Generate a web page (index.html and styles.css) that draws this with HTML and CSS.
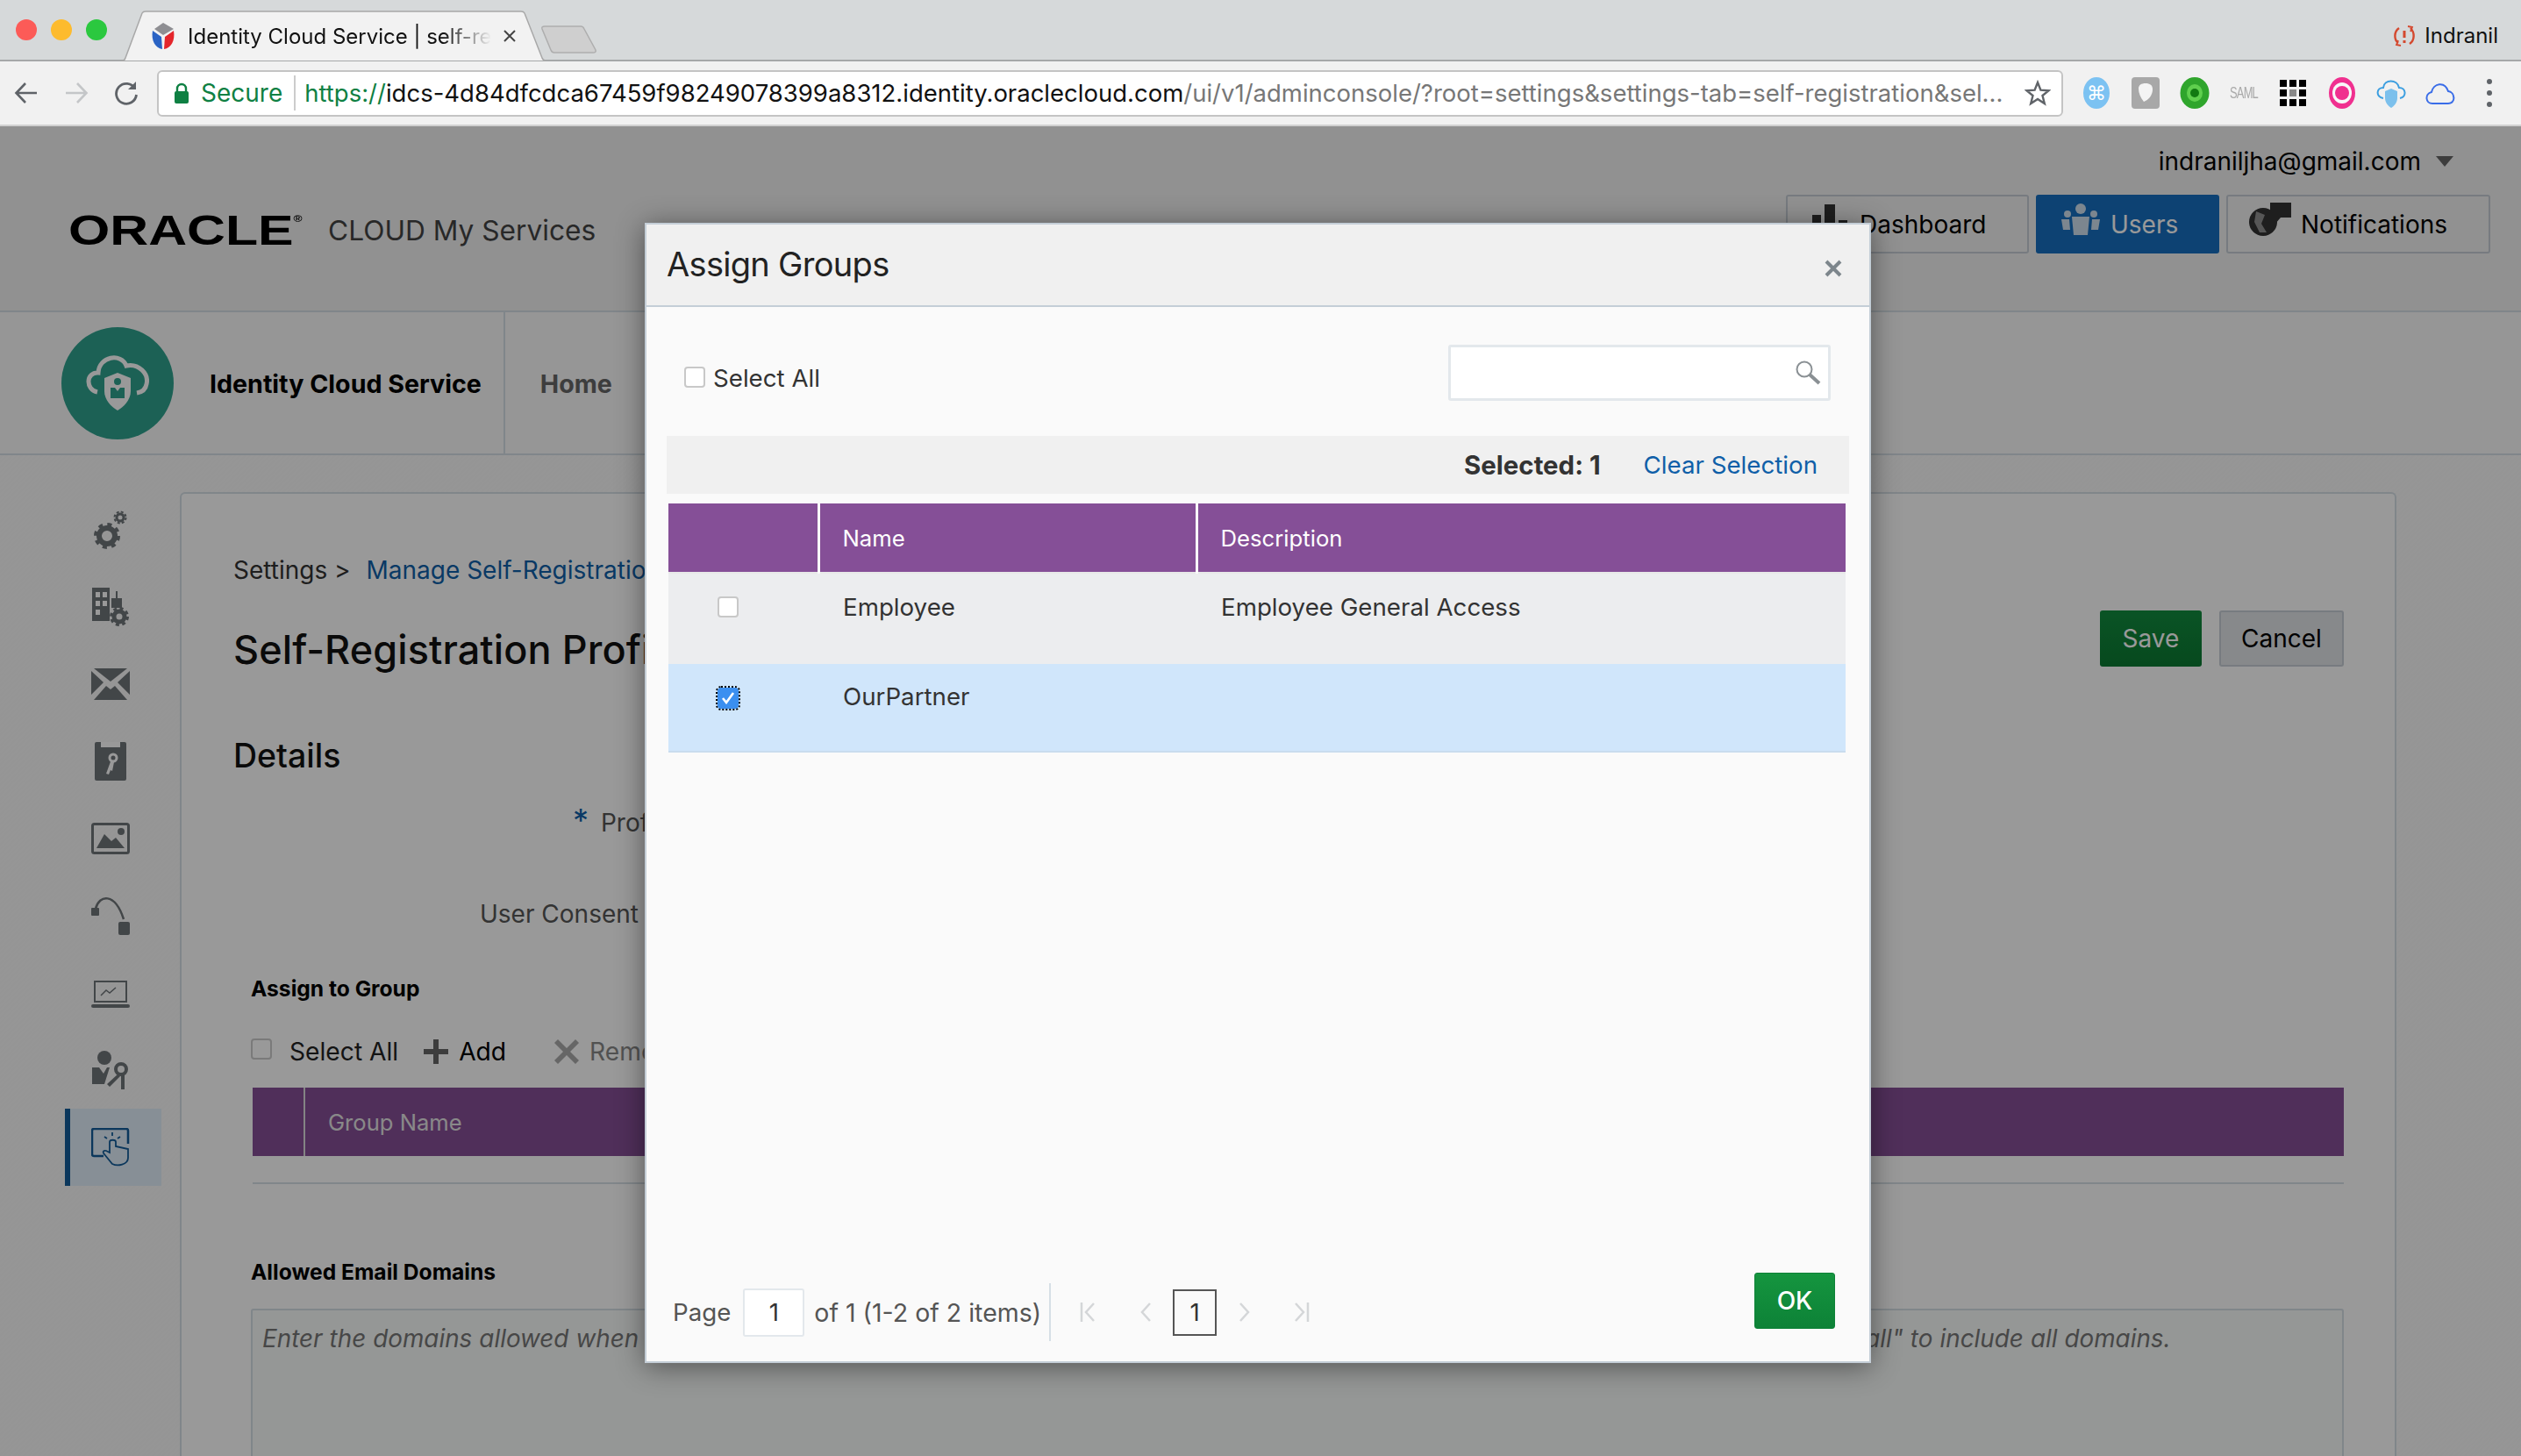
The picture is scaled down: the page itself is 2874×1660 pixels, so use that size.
FILE: index.html
```html
<!DOCTYPE html>
<html>
<head>
  <meta charset="utf-8">
  <title>Identity Cloud Service | self-registration</title>
  <meta name="viewport" content="width=device-width, initial-scale=1.0">
  <link rel="stylesheet" href="styles.css">
</head>
<body>
  <!-- browser chrome -->
  <div class="tabstrip">
    <div class="traffic">
      <span class="light light-red"></span>
      <span class="light light-yellow"></span>
      <span class="light light-green"></span>
    </div>
    <div class="tab">
      <svg class="tab-shape" width="484" height="58" viewBox="0 0 484 58"><path d="M0 57 H2 Q4 57 5 54 L24 3 Q25 1 28 1 H456 Q459 1 460 3 L480 54 Q481 57 484 57" fill="#f2f2f2" stroke="#a8a8a8" stroke-width="1.5"/></svg>
      <svg class="favicon" width="32" height="32" viewBox="0 0 32 32">
        <path d="M16 1 L28 8 L16 15 L6 8 Z" fill="#8e8e92"/>
        <path d="M4 10 L14 17 L15 31 C7 30 2 21 4 10 Z" fill="#2a63c4"/>
        <path d="M28 10 L18 17 L17 31 C25 30 30 21 28 10 Z" fill="#e4252b"/>
      </svg>
      <span class="tab-title">Identity Cloud Service | self-re</span>
      <svg class="tab-close" width="14" height="14" viewBox="0 0 14 14"><path d="M1 1L13 13M13 1L1 13" stroke="#444" stroke-width="2"/></svg>
    </div>
    <svg class="newtab" width="66" height="34" viewBox="0 0 66 34"><path d="M5 2 H46 Q49 2 50 5 L63 29 Q64 32 60 32 H16 Q13 32 12 29 L2 5 Q1 2 5 2 Z" fill="#cfcfcf" stroke="#aeaeae" stroke-width="1.5"/></svg>
    <div class="profile">
      <svg width="26" height="24" viewBox="0 0 26 24" fill="none" stroke="#d4492f" stroke-width="2.4"><path d="M7 3 C1 7 1 16 6 20 M19 21 C25 17 25 8 20 3"/><path d="M13 6 V14 M13 17 V20" stroke-width="3"/><path d="M17 1 L22 2 L20 7 M9 23 L4 22 L6 17" stroke-width="1.8"/></svg>
      <span>Indranil</span>
    </div>
  </div>

  <div class="toolbar">
    <svg class="nav-icon" width="28" height="30" viewBox="0 0 28 30" fill="none" stroke="#5f6368" stroke-width="2.6"><path d="M26 15 H3 M13 4 L2.5 15 L13 26"/></svg>
    <svg class="nav-icon" width="28" height="30" viewBox="0 0 28 30" fill="none" stroke="#c4c6c8" stroke-width="2.6"><path d="M2 15 H25 M15 4 L25.5 15 L15 26"/></svg>
    <svg class="nav-icon" width="28" height="30" viewBox="0 0 28 30" fill="none" stroke="#5f6368" stroke-width="2.8"><path d="M24 10 A11.5 11.5 0 1 0 25.5 17"/><path d="M25 2 V11 H16" fill="#5f6368" stroke="none"/></svg>
    <div class="omnibox">
      <svg class="lock" width="18" height="24" viewBox="0 0 18 24"><path d="M4 11 V7 A5 5 0 0 1 14 7 V11" fill="none" stroke="#0f8043" stroke-width="2.4"/><rect x="1" y="10" width="16" height="14" rx="2" fill="#0f8043"/></svg>
      <span class="secure">Secure</span>
      <span class="omni-sep"></span>
      <span class="url"><span class="url-scheme">https://</span><span class="url-host">idcs-4d84dfcdca67459f98249078399a8312.identity.oraclecloud.com</span>/ui/v1/adminconsole/?root=settings&amp;settings-tab=self-registration&amp;sel...</span>
      <svg class="star" width="30" height="30" viewBox="0 0 30 30"><path d="M15 3 L18.4 11.6 L27.6 12.2 L20.5 18 L22.8 27 L15 22 L7.2 27 L9.5 18 L2.4 12.2 L11.6 11.6 Z" fill="none" stroke="#5f6368" stroke-width="2.4"/></svg>
    </div>
    <div class="extensions">
      <span class="ext ext-cmd">⌘</span>
      <span class="ext ext-shield"><svg width="32" height="36" viewBox="0 0 32 36"><rect width="32" height="36" rx="4" fill="#a8a8a8"/><path d="M16 7 C21 7 24 9 24 14 C24 21 19 26 14 28 C10 23 8 18 8 13 C8 9 11 7 16 7 Z" fill="#f4f4f4"/></svg></span>
      <span class="ext"><svg width="34" height="36" viewBox="0 0 34 36"><ellipse cx="17" cy="18" rx="16.500" ry="18" fill="#2fa52c"/><ellipse cx="17" cy="18" rx="9" ry="10" fill="#5fcf4e"/><circle cx="17" cy="18" r="5" fill="#127a12"/></svg></span>
      <span class="ext ext-saml">SAML</span>
      <span class="ext"><svg width="30" height="30" viewBox="0 0 30 30"><path d="M0 0H8V8H0ZM11 0H19V8H11ZM22 0H30V8H22ZM0 11H8V19H0ZM22 11H30V19H22ZM0 22H8V30H0ZM11 22H19V30H11ZM22 22H30V30H22Z"/><path d="M11 11H19V19H11Z" fill="#888"/></svg></span>
      <span class="ext"><svg width="32" height="36" viewBox="0 0 32 36"><ellipse cx="16" cy="18" rx="15" ry="18" fill="#f0308f"/><ellipse cx="16" cy="18" rx="11" ry="12" fill="#f8f8f8"/><circle cx="16" cy="18" r="8" fill="#f0308f"/></svg></span>
      <span class="ext"><svg width="34" height="36" viewBox="0 0 34 36" fill="none" stroke="#3d9fe0" stroke-width="2"><path d="M8 24 C-1 22 0 12 8 12 C9 2 24 2 26 12 C34 12 35 22 27 24"/><path d="M10 16 L17 13 L24 16 V24 C24 29 20 33 17 35 C14 33 10 29 10 24 Z" fill="#7cc0ec" stroke="none"/></svg></span>
      <span class="ext"><svg width="34" height="26" viewBox="0 0 34 26" fill="none" stroke="#3a6de8" stroke-width="2"><path d="M8 25 C0 25 -1 14 7 12 C9 2 22 -1 26 11 C34 12 35 25 26 25 Z"/></svg></span>
      <span class="ext ext-kebab"><i></i><i></i><i></i></span>
    </div>
  </div>

  <!-- console page, dimmed by the overlay -->
  <div class="page">
    <header class="top-header">
      <div class="brand">
        <span class="oracle-logo">ORACLE<sup>®</sup></span>
        <span class="brand-text">CLOUD My Services</span>
      </div>
      <div class="user-area">
        <div class="user-line">indraniljha@gmail.com <span class="caret"></span></div>
        <div class="top-tabs">
          <a class="top-tab tab-dashboard">
            <svg class="tab-icon" width="40" height="34" viewBox="0 0 40 34"><path d="M0 12H10V34H0ZM14 0H26V34H14ZM30 18H40V34H30Z" fill="#333"/></svg>
            Dashboard
          </a>
          <a class="top-tab tab-users">
            <svg class="tab-icon" width="46" height="36" viewBox="0 0 46 36" fill="#cfe0ee"><circle cx="23" cy="6" r="6"/><circle cx="8" cy="12" r="4"/><circle cx="38" cy="12" r="4"/><path d="M13 15 H33 L31 36 H15 Z"/><path d="M1 18 H10 L11 30 H3 Z M36 18 H45 L43 30 H35 Z"/></svg>
            Users
          </a>
          <a class="top-tab tab-notifications">
            <svg class="tab-icon" width="48" height="38" viewBox="0 0 48 38"><circle cx="16" cy="22" r="16" fill="#333"/><path d="M8 10 L18 14 L14 24 L20 34 L12 34 L6 22 Z" fill="#8f8f8f"/><path d="M24 0 H48 V17 H36 L30 24 V17 H24 Z" fill="#333"/></svg>
            Notifications
          </a>
        </div>
      </div>
    </header>

    <nav class="service-bar">
      <span class="service-logo">
        <svg width="72" height="66" viewBox="0 0 72 66" fill="none" stroke="#fff" stroke-width="5"><path d="M13 43 C-1 40 0 20 14 21 C15 2 40 -2 46 13 C60 10 72 22 69 34 C68 40 64 43 58 44"/><path d="M21 27 L36 21 L51 27 V42 C51 52 43 60 36 64 C29 60 21 52 21 42 Z" fill="#fff" stroke="none"/><circle cx="36" cy="31" r="4" fill="#30a28e" stroke="none"/><path d="M28 38 L33 38 L36 42 L39 38 L44 38 V50 H28 Z" fill="#30a28e" stroke="none"/></svg>
      </span>
      <span class="service-name">Identity Cloud Service</span>
      <a class="service-home">Home</a>
    </nav>

    <div class="content">
      <aside class="sidebar">
        <div class="side-item">
          <svg width="38" height="44" viewBox="0 0 38 44" fill="none" stroke="#6f7579"><circle cx="15" cy="29" r="9" stroke-width="6"/><circle cx="15" cy="29" r="13" stroke-width="4" stroke-dasharray="5 5.200"/><circle cx="30" cy="8" r="4" stroke-width="3"/><circle cx="30" cy="8" r="6.500" stroke-width="2" stroke-dasharray="3 2.100"/></svg>
        </div>
        <div class="side-item">
          <svg width="42" height="44" viewBox="0 0 42 44" fill="#6f7579"><path d="M0 0H20V38H0Z"/><path d="M4 5H9V11H4ZM12 5H17V11H12ZM4 15H9V21H4ZM12 15H17V21H12ZM4 25H9V31H4Z" fill="#fff"/><path d="M22 12H27V4H29V12H34V23H22Z"/><circle cx="31" cy="33" r="6" fill="none" stroke="#6f7579" stroke-width="5"/><circle cx="31" cy="33" r="9.500" fill="none" stroke="#6f7579" stroke-width="3" stroke-dasharray="4 3.500"/></svg>
        </div>
        <div class="side-item">
          <svg width="44" height="36" viewBox="0 0 44 36" fill="#6f7579"><path d="M3 0H41L22 15Z"/><path d="M0 3L14 16L0 30ZM44 3L30 16L44 30Z"/><path d="M3 36L17 20L22 24L27 20L41 36Z"/></svg>
        </div>
        <div class="side-item">
          <svg width="36" height="44" viewBox="0 0 36 44" fill="#6f7579"><path d="M2 0H34Q36 0 36 2V42Q36 44 34 44H2Q0 44 0 42V2Q0 0 2 0Z"/><path d="M7 0H29V6H7Z" fill="#fff"/><circle cx="21" cy="18" r="4" fill="none" stroke="#fff" stroke-width="3"/><path d="M18.500 21L13 36L16 37L18 32L20 33L22 23Z" fill="#fff"/></svg>
        </div>
        <div class="side-item">
          <svg width="44" height="36" viewBox="0 0 44 36" fill="none"><rect x="1.500" y="1.500" width="41" height="33" rx="2" stroke="#6f7579" stroke-width="3"/><path d="M6 29L15 13L23 21L28 17L38 29Z" fill="#6f7579"/><circle cx="34" cy="10" r="4" fill="#6f7579"/></svg>
        </div>
        <div class="side-item">
          <svg width="44" height="44" viewBox="0 0 44 44" fill="none"><path d="M5 14C9 -2 27 -5 37 26" stroke="#6f7579" stroke-width="2.500"/><rect y="13" width="9" height="9" rx="1" fill="#6f7579"/><rect x="31" y="29" width="13" height="15" rx="2" fill="#6f7579"/></svg>
        </div>
        <div class="side-item side-laptop">
          <svg width="44" height="31" viewBox="0 0 44 31" fill="none" stroke="#6f7579" stroke-width="2"><rect x="4" y="1" width="36" height="23"/><path d="M11 17L17 11L21 14L28 8" stroke-width="1.500"/><rect y="27" width="44" height="4" rx="2" fill="#6f7579" stroke="none"/></svg>
        </div>
        <div class="side-item">
          <svg width="42" height="44" viewBox="0 0 42 44" fill="#6f7579"><circle cx="14" cy="8" r="8"/><path d="M0 19H8L13 26L17 19H20L14 38H0Z"/><circle cx="33" cy="21" r="6" fill="none" stroke="#6f7579" stroke-width="4"/><path d="M30 26L17 38L20 41L32 29ZM33 27H37V44H33Z"/></svg>
        </div>
        <div class="side-item side-active">
          <svg width="44" height="44" viewBox="0 0 44 44" fill="none" stroke="#135d9a" stroke-width="2.500"><path d="M14 32H3Q1 32 1 30V3Q1 1 3 1H40Q42 1 42 3V18"/><path d="M21 16V28L17 26C13 25 13 28 15 30L24 41C30 44 42 42 42 34V24L28 21V16C28 13 21 13 21 16Z" stroke-width="1.800"/><path d="M24 5V9M15 10L18 12M33 10L30 12" stroke-width="1.800"/></svg>
        </div>
      </aside>

      <main class="card">
        <div class="breadcrumb">Settings &gt; <a>Manage Self-Registration Profiles</a></div>
        <div class="title-row">
          <h1>Self-Registration Profiles</h1>
          <div class="title-actions">
            <button class="btn btn-save">Save</button>
            <button class="btn btn-cancel">Cancel</button>
          </div>
        </div>
        <h2>Details</h2>
        <div class="field field-profile"><span class="req">*</span> Profile Name</div>
        <div class="field field-consent">User Consent</div>

        <div class="indent">
          <div class="sub-title sub-assign">Assign to Group</div>
          <div class="list-tools">
            <span class="page-check"></span>
            <span class="tool-select">Select All</span>
            <svg class="tool-add" width="28" height="28" viewBox="0 0 28 28"><path d="M11 0H17V11H28V17H17V28H11V17H0V11H11Z" fill="#666"/></svg>
            <span class="tool-add-label">Add</span>
            <svg class="tool-remove" width="28" height="28" viewBox="0 0 28 28"><path d="M4 0L14 10L24 0L28 4L18 14L28 24L24 28L14 18L4 28L0 24L10 14L0 4Z" fill="#aaa"/></svg>
            <span class="tool-remove-label">Remove</span>
          </div>
          <div class="group-head"><span class="group-check"></span><span class="group-name">Group Name</span></div>
          <div class="group-line"></div>
          <div class="sub-title sub-domains">Allowed Email Domains</div>
          <div class="domains">
            Enter the domains allowed when users register with this self-registration profile. Separate multiple email domains with a comma, or enter "all" to include all domains.
            <svg class="grip" width="18" height="18" viewBox="0 0 18 18" fill="none" stroke="#333" stroke-width="1.500"><path d="M1 17L17 1M10 17L17 10"/></svg>
          </div>
        </div>
      </main>
    </div>

    <div class="overlay"></div>

    <!-- Assign Groups dialog -->
    <div class="dialog">
      <div class="dialog-head">
        <span class="dialog-title">Assign Groups</span>
        <svg class="dialog-close" width="20" height="20" viewBox="0 0 20 20"><path d="M2 2L18 18M18 2L2 18" stroke="#7d868c" stroke-width="4"/></svg>
      </div>
      <div class="dialog-tools">
        <label class="select-all"><span class="check"></span>Select All</label>
        <div class="search">
          <svg width="30" height="30" viewBox="0 0 30 30" fill="none" stroke="#8a9094"><circle cx="11" cy="11" r="8.500" stroke-width="2"/><path d="M17 17L28 27" stroke-width="4"/></svg>
        </div>
      </div>
      <div class="selected-bar">
        <b>Selected: 1</b>
        <a>Clear Selection</a>
      </div>
      <table class="groups">
        <thead>
          <tr><th class="col-check"></th><th class="col-name">Name</th><th>Description</th></tr>
        </thead>
        <tbody>
          <tr class="row-plain">
            <td class="cell-check"><span class="check"></span></td>
            <td>Employee</td>
            <td>Employee General Access</td>
          </tr>
          <tr class="row-selected">
            <td class="cell-check">
              <span class="check check-on">
                <svg width="16" height="14" viewBox="0 0 16 14" fill="none" stroke="#fff" stroke-width="2.600"><path d="M2 7L6 12L14 1"/></svg>
              </span>
            </td>
            <td>OurPartner</td>
            <td></td>
          </tr>
        </tbody>
      </table>
      <div class="dialog-foot">
        <div class="pager">
          <span>Page</span>
          <span class="page-input">1</span>
          <span class="page-count">of 1 (1-2 of 2 items)</span>
          <span class="pager-sep"></span>
          <svg class="pager-first" width="18" height="22" viewBox="0 0 18 22" fill="none" stroke="#d4d6d8" stroke-width="2.500"><path d="M2 0V22M16 1L7 11L16 21"/></svg>
          <svg class="pager-prev" width="14" height="22" viewBox="0 0 14 22" fill="none" stroke="#d4d6d8" stroke-width="2.500"><path d="M12 1L3 11L12 21"/></svg>
          <span class="page-current">1</span>
          <svg class="pager-next" width="14" height="22" viewBox="0 0 14 22" fill="none" stroke="#d4d6d8" stroke-width="2.500"><path d="M2 1L11 11L2 21"/></svg>
          <svg class="pager-last" width="18" height="22" viewBox="0 0 18 22" fill="none" stroke="#d4d6d8" stroke-width="2.500"><path d="M16 0V22M2 1L11 11L2 21"/></svg>
        </div>
        <button class="btn btn-ok">OK</button>
      </div>
    </div>
  </div>
</body>
</html>
```

FILE: styles.css
```css
* {
  margin: 0;
  padding: 0;
  box-sizing: border-box;
}

body {
  font-family: Inter, "Liberation Sans", sans-serif;
  width: 2874px;
  height: 1660px;
  overflow: hidden;
  color: #333;
  font-size: 27.7px;
}

/* browser chrome */
.tabstrip {
  display: flex;
  align-items: flex-start;
  height: 70px;
  background: #d6d9da;
  border-bottom: 2px solid #a6a8a9;
}

.traffic {
  display: flex;
  gap: 16px;
  padding: 22px 0 0 18px;
  width: 138px;
}

.light {
  width: 24px;
  height: 24px;
  border-radius: 50%;
}

.light-red { background: #fc5b57; }
.light-yellow { background: #fdbb2e; }
.light-green { background: #2bc83f; }

.tab {
  position: relative;
  display: flex;
  align-items: center;
  width: 484px;
  height: 58px;
  padding: 0 32px;
  margin-top: 12px;
}

.tab-shape {
  position: absolute;
  left: 0;
  top: 0;
}

.favicon {
  position: relative;
  flex: none;
}

.tab-title {
  position: relative;
  flex: none;
  width: 346px;
  margin-left: 12px;
  overflow: hidden;
  white-space: nowrap;
  color: #111;
  font-size: 24px;
  -webkit-mask-image: linear-gradient(90deg, #000 84%, transparent 100%);
  mask-image: linear-gradient(90deg, #000 84%, transparent 100%);
}

.tab-close {
  position: relative;
  flex: none;
  margin-left: 14px;
}

.newtab {
  margin: 28px 0 0 -6px;
}

.profile {
  display: flex;
  align-items: center;
  gap: 10px;
  margin-left: auto;
  padding: 26px 26px 0 0;
  color: #111;
  font-size: 24px;
}

.toolbar {
  display: flex;
  align-items: center;
  height: 74px;
  padding-left: 16px;
  background: #f1f1f1;
  border-bottom: 2px solid #d0d0d0;
}

.nav-icon {
  flex: none;
  margin-right: 29px;
}

.nav-icon:nth-child(3) {
  margin-right: 21px;
}

.omnibox {
  display: flex;
  align-items: center;
  flex: none;
  width: 2173px;
  height: 53px;
  padding: 0 12px 0 17px;
  background: #fff;
  border: 2px solid #c4c4c4;
  border-radius: 6px;
  font-size: 27.5px;
  white-space: nowrap;
}

.secure {
  margin-left: 13px;
  color: #0f8043;
  font-size: 28px;
}

.omni-sep {
  width: 2px;
  height: 40px;
  margin: 0 10px 0 13px;
  background: #ccc;
}

.url {
  flex: 1;
  color: #777;
}

.url-scheme { color: #0f8043; }
.url-host { color: #111; }

.extensions {
  display: flex;
  align-items: center;
  flex: 1;
  padding-left: 10px;
}

.ext {
  display: flex;
  align-items: center;
  justify-content: center;
  flex: none;
  width: 56px;
  height: 40px;
}

.ext-cmd {
  width: 30px;
  height: 36px;
  margin: 0 13px;
  background: #7cc2f2;
  border-radius: 50%;
  color: #fff;
  font: 22px "DejaVu Sans", sans-serif;
}

.ext-saml {
  color: #a9a9a9;
  font: 19px "Liberation Sans", sans-serif;
  letter-spacing: -1.2px;
  transform: scaleX(0.68);
}

.ext-kebab {
  flex-direction: column;
  gap: 7px;
}

.ext-kebab i {
  width: 6px;
  height: 6px;
  background: #5f6368;
  border-radius: 50%;
}

/* console page */
.page {
  position: relative;
  height: 1516px;
  overflow: hidden;
  background: repeating-linear-gradient(135deg, #fbfbfb 0 2px, #f8f8f8 2px 4px);
}

.top-header {
  display: flex;
  justify-content: space-between;
  height: 212px;
  padding: 0 35px 0 78px;
  background: #f2f2f2;
  border-bottom: 2px solid #d6dfe6;
}

.brand {
  display: flex;
  align-items: center;
  padding-top: 26px;
}

.oracle-logo {
  flex: none;
  width: 296px;
  color: #000;
  font: bold 49px "Liberation Sans", sans-serif;
  transform: scaleX(1.24);
  transform-origin: left center;
}

.oracle-logo sup {
  font-size: 11px;
  vertical-align: 26px;
}

.brand-text {
  color: #444;
  font-size: 31.7px;
}

.user-area {
  display: flex;
  flex-direction: column;
  align-items: flex-end;
}

.user-line {
  display: flex;
  align-items: center;
  gap: 17px;
  height: 40px;
  margin-top: 20px;
  padding-right: 42px;
  color: #000;
  font-size: 28px;
}

.caret {
  width: 0;
  height: 0;
  border-left: 10px solid transparent;
  border-right: 10px solid transparent;
  border-top: 12px solid #666;
}

.top-tabs {
  display: flex;
  gap: 8px;
  margin-top: 18px;
}

.top-tab {
  display: flex;
  align-items: center;
  gap: 11px;
  height: 67px;
  padding: 0 26px;
  background: #f2f2f2;
  border: 2px solid #c6ced5;
  border-radius: 3px;
  color: #000;
  font-size: 28px;
}

.tab-icon {
  margin-top: -12px;
}

.tab-dashboard {
  width: 277px;
  gap: 14px;
  padding-left: 28px;
}

.tab-users {
  width: 209px;
  background: #176fc0;
  border-color: #176fc0;
  color: #fff;
}

.tab-notifications {
  width: 301px;
  padding-left: 24px;
}

.service-bar {
  display: flex;
  align-items: center;
  height: 163px;
  padding-left: 70px;
  background: #fbfbfb;
  border-bottom: 2px solid #d6dfe6;
}

.service-logo {
  display: flex;
  align-items: center;
  justify-content: center;
  width: 128px;
  height: 128px;
  background: #30a28e;
  border-radius: 50%;
}

.service-name {
  display: flex;
  align-items: center;
  height: 161px;
  margin-left: 41px;
  padding: 2px 25px 0 0;
  border-right: 2px solid #d6dfe6;
  color: #000;
  font-weight: 700;
  font-size: 28.6px;
}

.service-home {
  margin: 2px 0 0 40px;
  color: #666;
  font-weight: 700;
  font-size: 28.6px;
}

.content {
  display: flex;
  align-items: flex-start;
}

.sidebar {
  flex: none;
  width: 110px;
  margin-left: 74px;
  padding-top: 41px;
}

.side-item {
  display: flex;
  align-items: center;
  justify-content: center;
  height: 88px;
  padding-right: 6px;
}

.side-laptop {
  padding-top: 3px;
}

.side-active {
  border-left: 6px solid #135d9a;
  background: #e1eefa;
  padding-right: 12px;
}

.card {
  flex: none;
  width: 2527px;
  min-height: 1200px;
  margin: 42px 0 0 21px;
  padding: 0 58px 0 59px;
  background: #fff;
  border: 2px solid #d6dfe6;
  border-bottom: 0;
  border-radius: 6px 6px 0 0;
}

.breadcrumb {
  margin-top: 67px;
  line-height: 40px;
  color: #333;
  font-size: 28px;
}

.breadcrumb a {
  margin-left: 10px;
  color: #0f5fa8;
}

.title-row {
  display: flex;
  justify-content: space-between;
  height: 75px;
  margin-top: 26px;
}

.title-row h1 {
  padding-top: 15px;
  line-height: 60px;
  color: #111;
  font-weight: 500;
  font-size: 45px;
  letter-spacing: 0.1px;
}

.title-actions {
  display: flex;
  gap: 20px;
}

.btn {
  height: 64px;
  border-radius: 3px;
  font: 28px Inter, "Liberation Sans", sans-serif;
}

.btn-save {
  width: 116px;
  background: linear-gradient(#128c3f, #0b7a32);
  border: 0;
  color: #fff;
}

.btn-cancel {
  width: 142px;
  background: #e2e5e8;
  border: 2px solid #c6ced5;
  color: #000;
}

.card h2 {
  margin-top: 66px;
  line-height: 50px;
  color: #111;
  font-weight: 500;
  font-size: 37.5px;
}

.field {
  line-height: 36px;
  color: #555;
  font-size: 28px;
  white-space: nowrap;
}

.req {
  color: #0f5fa8;
  font-size: 36px;
  line-height: 20px;
  margin-right: 6px;
}

.field-profile {
  margin-top: 33px;
  padding-left: 387px;
}

.field-consent {
  margin-top: 68px;
  padding-left: 281px;
}

.indent {
  margin-left: 20px;
}

.sub-title {
  line-height: 30px;
  color: #000;
  font-weight: 700;
  font-size: 24.6px;
}

.sub-assign { margin-top: 52px; }

.list-tools {
  display: flex;
  align-items: center;
  height: 36px;
  margin-top: 39px;
  margin-bottom: -1px;
  color: #000;
  font-size: 28.2px;
}

.page-check {
  width: 24px;
  height: 24px;
  margin-top: -6px;
  background: #fff;
  border: 2px solid #ccc;
  border-radius: 4px;
}

.tool-select { margin-left: 20px; color: #222; }
.tool-add { margin-left: 29px; }
.tool-add-label { margin-left: 12px; }
.tool-remove { margin-left: 55px; }
.tool-remove-label { margin-left: 12px; color: #888; }

.group-head {
  display: flex;
  align-items: center;
  height: 78px;
  margin: 24px 0 0 2px;
  background: #854f97;
  color: #e5e5e5;
}

.group-check {
  align-self: stretch;
  width: 60px;
  border-right: 2px solid #ddd;
}

.group-name { margin-left: 26px; font-size: 25.6px; }

.group-line {
  height: 2px;
  margin: 30px 0 0 2px;
  background: #d6dfe6;
}

.sub-domains { margin-top: 85px; }

.domains {
  position: relative;
  height: 260px;
  margin-top: 27px;
  padding: 15px 11px;
  background: #f9fcfa;
  border: 2px solid #d6dfe6;
  border-radius: 3px;
  color: #777;
  font-style: italic;
  font-size: 27.8px;
  word-spacing: 0.3px;
}

.grip {
  position: absolute;
  right: 2px;
  bottom: 2px;
}

.overlay {
  position: absolute;
  inset: 0;
  background: rgba(0, 0, 0, 0.4);
}

/* dialog */
.dialog {
  position: absolute;
  left: 735px;
  top: 110px;
  display: flex;
  flex-direction: column;
  width: 1398px;
  height: 1300px;
  background: #fafafa;
  border: 2px solid #c4ced7;
  box-shadow: 0 4px 30px rgba(0, 0, 0, 0.45);
}

.dialog-head {
  display: flex;
  align-items: center;
  justify-content: space-between;
  height: 94px;
  padding: 0 31px 0 23px;
  background: #f0f0f0;
  border-bottom: 2px solid #c4ced7;
}

.dialog-title {
  padding-bottom: 2px;
  color: #222;
  font-size: 38px;
  letter-spacing: -0.7px;
}

.dialog-close {
  margin-top: 8px;
}

.dialog-tools {
  display: flex;
  align-items: center;
  justify-content: space-between;
  height: 64px;
  margin: 43px 44px 0 43px;
}

.select-all {
  display: flex;
  align-items: center;
  gap: 9px;
  margin-top: 12px;
  color: #333;
}

.select-all .check {
  margin-top: -3px;
}

.check {
  display: inline-flex;
  align-items: center;
  justify-content: center;
  width: 24px;
  height: 24px;
  background: #fff;
  border: 2px solid #c8c8c8;
  border-radius: 4px;
}

.check-on {
  background: #3b8ff0;
  border-color: #3b8ff0;
  outline: 2px dotted #000;
  outline-offset: 0;
}

.search {
  display: flex;
  align-items: center;
  justify-content: flex-end;
  width: 436px;
  height: 64px;
  padding-right: 8px;
  background: #fff;
  border: 3px solid #e3e8ec;
  border-radius: 3px;
}

.selected-bar {
  display: flex;
  justify-content: flex-end;
  align-items: center;
  gap: 49px;
  height: 66px;
  margin: 40px 23px 0;
  padding-right: 36px;
  background: #f0f0f0;
}

.selected-bar b {
  font-size: 29.4px;
}

.selected-bar a { color: #0f5fa8; }

.groups {
  width: 1342px;
  margin: 11px 0 0 25px;
  border-collapse: collapse;
  table-layout: fixed;
}

.groups th {
  height: 79px;
  padding-left: 26px;
  background: #854f97;
  border-left: 3px solid #fafafa;
  color: #fff;
  font-weight: 400;
  font-size: 25.7px;
  text-align: left;
}

.groups th.col-check {
  width: 171px;
  border-left: 0;
}

.groups th.col-name { width: 431px; }

.groups td {
  padding: 18px 0 0 28px;
  vertical-align: top;
  line-height: 40px;
}

.row-plain td {
  height: 104px;
  background: #ecedef;
  border-top: 2px solid #e8e8e8;
}

.row-selected td {
  height: 100px;
  background: #d0e6fb;
  border-bottom: 2px solid #c9dcee;
}

.groups td.cell-check {
  padding: 26px 0 0 56px;
  line-height: 24px;
}

.groups .row-selected td {
  padding-top: 17px;
}

.groups .row-selected td.cell-check {
  padding-top: 24px;
}

.dialog-foot {
  display: flex;
  justify-content: space-between;
  margin-top: auto;
  padding: 0 39px 23px 30px;
}

.pager {
  display: flex;
  align-items: center;
  height: 66px;
  margin-top: 12px;
  color: #555;
}

.page-input {
  display: flex;
  align-items: center;
  justify-content: center;
  width: 70px;
  height: 55px;
  margin: 0 11px 0 14px;
  background: #fff;
  border: 2px solid #e3e8ec;
  border-radius: 3px;
  color: #333;
}

.page-count {
  font-size: 28.5px;
}

.pager-sep {
  width: 2px;
  height: 66px;
  margin-left: 9px;
  background: #d6dfe6;
}

.pager-first { margin-left: 33px; }
.pager-prev { margin-left: 50px; }
.pager-next { margin-left: 25px; }
.pager-last { margin-left: 49px; }

.page-current {
  display: flex;
  align-items: center;
  justify-content: center;
  width: 50px;
  height: 53px;
  margin-left: 24px;
  border: 2px solid #555;
  color: #333;
}

.btn-ok {
  width: 92px;
  background: linear-gradient(#15953f, #0d8237);
  border: 1px solid #0d8237;
  color: #fff;
  font-weight: 500;
}
```
